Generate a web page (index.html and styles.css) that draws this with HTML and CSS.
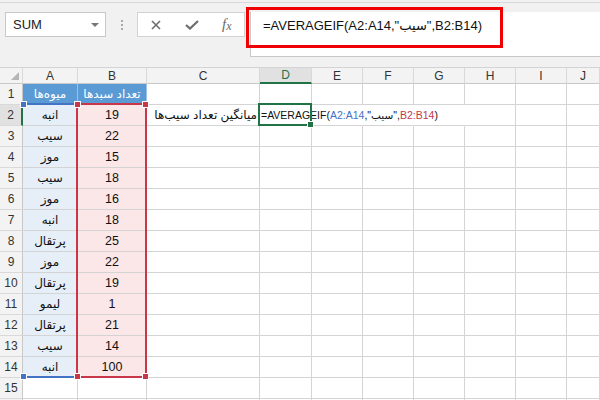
FILE: index.html
```html
<!DOCTYPE html>
<html lang="fa">
<head>
<meta charset="utf-8">
<link rel="stylesheet" href="styles.css">
</head>
<body>
<div class="topbar">
  <div class="namebox"><span>SUM</span><i class="caret"></i></div>
  <div class="dots"><b></b><b></b><b></b></div>
  <div class="btns">
    <svg class="ic-x" width="10" height="10" viewBox="0 0 10 10"><path d="M1 1L9 9M9 1L1 9" stroke="#6e6e6e" stroke-width="1.6"/></svg>
    <svg class="ic-ok" width="14" height="10" viewBox="0 0 14 10"><path d="M1 5L5 8.6L13 1" stroke="#6e6e6e" stroke-width="2.2" fill="none"/></svg>
    <span class="fx">f<span class="fxx">x</span></span>
  </div>
  <div class="formula">
    <div class="ftext">=AVERAGEIF(A2:A14,"سیب",B2:B14)</div>
    <div class="redbox"></div>
  </div>
</div>
<div class="sheet">
  <div class="h corner"><i class="tri"></i></div><div class="h">A</div><div class="h">B</div><div class="h">C</div><div class="h hsel">D</div><div class="h">E</div><div class="h">F</div><div class="h">G</div><div class="h">H</div><div class="h">I</div><div class="h">J</div>

  <div class="r">1</div><div class="c hd">میوه‌ها</div><div class="c hd">تعداد سبدها</div><div class="c"></div><div class="c"></div><div class="c"></div><div class="c"></div><div class="c"></div><div class="c"></div><div class="c"></div><div class="c"></div>

  <div class="r rsel">2</div><div class="c fa">انبه</div><div class="c nb">19</div><div class="c lbl">میانگین تعداد سیب‌ها</div><div class="c act nr">=AVERAGEIF(<span class="rb">A2:A14</span>,"سیب",<span class="rr">B2:B14</span>)</div><div class="c nr"></div><div class="c nr"></div><div class="c nr"></div><div class="c"></div><div class="c"></div><div class="c"></div>

  <div class="r">3</div><div class="c fa">سیب</div><div class="c nb">22</div><div class="c"></div><div class="c"></div><div class="c"></div><div class="c"></div><div class="c"></div><div class="c"></div><div class="c"></div><div class="c"></div>
  <div class="r">4</div><div class="c fa">موز</div><div class="c nb">15</div><div class="c"></div><div class="c"></div><div class="c"></div><div class="c"></div><div class="c"></div><div class="c"></div><div class="c"></div><div class="c"></div>
  <div class="r">5</div><div class="c fa">سیب</div><div class="c nb">18</div><div class="c"></div><div class="c"></div><div class="c"></div><div class="c"></div><div class="c"></div><div class="c"></div><div class="c"></div><div class="c"></div>
  <div class="r">6</div><div class="c fa">موز</div><div class="c nb">16</div><div class="c"></div><div class="c"></div><div class="c"></div><div class="c"></div><div class="c"></div><div class="c"></div><div class="c"></div><div class="c"></div>
  <div class="r">7</div><div class="c fa">انبه</div><div class="c nb">18</div><div class="c"></div><div class="c"></div><div class="c"></div><div class="c"></div><div class="c"></div><div class="c"></div><div class="c"></div><div class="c"></div>
  <div class="r">8</div><div class="c fa">پرتقال</div><div class="c nb">25</div><div class="c"></div><div class="c"></div><div class="c"></div><div class="c"></div><div class="c"></div><div class="c"></div><div class="c"></div><div class="c"></div>
  <div class="r">9</div><div class="c fa">موز</div><div class="c nb">22</div><div class="c"></div><div class="c"></div><div class="c"></div><div class="c"></div><div class="c"></div><div class="c"></div><div class="c"></div><div class="c"></div>
  <div class="r">10</div><div class="c fa">پرتقال</div><div class="c nb">19</div><div class="c"></div><div class="c"></div><div class="c"></div><div class="c"></div><div class="c"></div><div class="c"></div><div class="c"></div><div class="c"></div>
  <div class="r">11</div><div class="c fa">لیمو</div><div class="c nb">1</div><div class="c"></div><div class="c"></div><div class="c"></div><div class="c"></div><div class="c"></div><div class="c"></div><div class="c"></div><div class="c"></div>
  <div class="r">12</div><div class="c fa">پرتقال</div><div class="c nb">21</div><div class="c"></div><div class="c"></div><div class="c"></div><div class="c"></div><div class="c"></div><div class="c"></div><div class="c"></div><div class="c"></div>
  <div class="r">13</div><div class="c fa">سیب</div><div class="c nb">14</div><div class="c"></div><div class="c"></div><div class="c"></div><div class="c"></div><div class="c"></div><div class="c"></div><div class="c"></div><div class="c"></div>
  <div class="r">14</div><div class="c fa">انبه</div><div class="c nb">100</div><div class="c"></div><div class="c"></div><div class="c"></div><div class="c"></div><div class="c"></div><div class="c"></div><div class="c"></div><div class="c"></div>
  <div class="r">15</div><div class="c"></div><div class="c"></div><div class="c"></div><div class="c"></div><div class="c"></div><div class="c"></div><div class="c"></div><div class="c"></div><div class="c"></div><div class="c"></div>
  <div class="r">16</div><div class="c"></div><div class="c"></div><div class="c"></div><div class="c"></div><div class="c"></div><div class="c"></div><div class="c"></div><div class="c"></div><div class="c"></div><div class="c"></div>

  <div class="blue-range"><i class="hdl hdl-tl"></i><i class="hdl hdl-bl"></i></div>
  <div class="red-range"><i class="hdl hdl-tl"></i><i class="hdl hdl-tr"></i><i class="hdl hdl-bl"></i><i class="hdl hdl-br"></i></div>
  <div class="active-box"><i class="fill-handle"></i></div>
</div>
</body>
</html>
```

FILE: styles.css
```css
html, body {
  margin: 0;
  padding: 0;
  width: 600px;
  height: 400px;
  overflow: hidden;
  background: #ffffff;
  font-family: "Liberation Sans", "DejaVu Sans", sans-serif;
}

.topbar {
  height: 68px;
  box-sizing: border-box;
  display: flex;
  align-items: flex-start;
  padding-top: 12px;
  background: linear-gradient(#f1f1f1 0 2px, #d9d9d9 2px 3px, #f1f1f1 3px);
  border-bottom: 1px solid #d4d4d4;
}

.namebox {
  margin-left: 5px;
  width: 101px;
  height: 25px;
  box-sizing: border-box;
  background: #fff;
  border: 1px solid #c8c8c8;
  display: flex;
  align-items: center;
  justify-content: space-between;
  padding: 0 6px 0 7px;
  font-size: 13px;
  color: #222;
}

.caret {
  width: 0;
  height: 0;
  border-left: 4px solid transparent;
  border-right: 4px solid transparent;
  border-top: 4px solid #777;
}

.dots {
  margin-left: 15px;
  width: 2px;
  padding-top: 8px;
  display: flex;
  flex-direction: column;
  gap: 2px;
}
.dots b {
  display: block;
  width: 2px;
  height: 2px;
  background: #a8a8a8;
}

.btns {
  margin-left: 14px;
  width: 108px;
  height: 25px;
  box-sizing: border-box;
  background: #fff;
  border: 1px solid #d2d2d2;
  display: flex;
  align-items: center;
}
.ic-x { margin-left: 13px; }
.ic-ok { margin-left: 24px; }
.fx {
  margin-left: 23px;
  font-family: "Liberation Serif", serif;
  font-style: italic;
  font-size: 15px;
  color: #6a6a6a;
  line-height: 1;
}
.fxx { font-size: 12px; position: relative; top: 1px; }

.formula {
  position: relative;
  margin-left: 5px;
  flex: 1;
  height: 45px;
  box-sizing: border-box;
  background: #fff;
  border-left: 1px solid #c8c8c8;
  border-bottom: 1px solid #c8c8c8;
}
.ftext {
  padding-left: 12px;
  line-height: 27px;
  font-size: 13px;
  color: #111;
  white-space: nowrap;
}
.redbox {
  position: absolute;
  left: -5px;
  top: -5px;
  width: 257px;
  height: 41px;
  box-sizing: border-box;
  border: 3px solid #f00000;
}

.sheet {
  position: relative;
  display: grid;
  grid-template-columns: 23px 55px 69px 113px 52px 51px 51px 51px 51px 51px 1fr;
  grid-template-rows: 16px;
  grid-auto-rows: 21px;
  background: #fff;
}

.h, .r, .c {
  box-sizing: border-box;
  border-right: 1px solid #d4d4d4;
  border-bottom: 1px solid #d4d4d4;
  display: flex;
  align-items: center;
  justify-content: center;
  white-space: nowrap;
}

.h {
  background: #f3f3f3;
  font-size: 12px;
  color: #333;
  border-right-color: #d9d9d9;
  border-bottom-color: #c8c8c8;
}
.hsel {
  background: #e1e1e1;
  color: #217346;
  border-bottom: 2px solid #217346;
}
.corner { position: relative; }
.tri {
  position: absolute;
  right: 3px;
  bottom: 3px;
  width: 0;
  height: 0;
  border-left: 8px solid transparent;
  border-bottom: 8px solid #b5b5b5;
}

.r {
  background: #f3f3f3;
  font-size: 12px;
  color: #333;
  border-right-color: #c8c8c8;
  border-bottom-color: #d9d9d9;
}
.rsel {
  background: #e1e1e1;
  border-right: 2px solid #217346;
}

.c {
  font-size: 12px;
  color: #111;
}
.hd {
  background: #5b9bd5;
  color: #fff;
  direction: rtl;
  border-right-color: #9cc2e5;
}
.fa {
  background: #e6eef8;
  direction: rtl;
  font-size: 12px;
}
.nb {
  background: #fbe7e8;
  font-size: 12.5px;
}
.lbl {
  direction: rtl;
  justify-content: flex-start;
  padding-right: 2px;
  font-size: 12px;
  overflow: visible;
}
.act {
  justify-content: flex-start;
  padding-left: 1px;
  font-size: 10.5px;
  overflow: visible;
  position: relative;
  z-index: 1;
}
.rb { color: #4472c4; }
.rr { color: #c8364a; }
.nr { border-right-color: transparent; }

.blue-range {
  position: absolute;
  left: 23px;
  top: 35px;
  width: 54px;
  height: 275px;
  box-sizing: border-box;
  border-top: 2px solid #4472c4;
  border-bottom: 2px solid #4472c4;
}
.blue-range .hdl { background: #4472c4; }

.red-range {
  position: absolute;
  left: 76px;
  top: 35px;
  width: 71px;
  height: 275px;
  box-sizing: border-box;
  border: 2px solid #c8364a;
}
.red-range .hdl { background: #c8364a; }

.hdl {
  position: absolute;
  width: 5px;
  height: 5px;
  border: 1px solid #fff;
}
.hdl-tl { left: -4px; top: -4px; }
.hdl-tr { right: -4px; top: -4px; }
.hdl-bl { left: -4px; bottom: -4px; }
.hdl-br { right: -4px; bottom: -4px; }
.blue-range .hdl-tl, .blue-range .hdl-bl { left: -3px; }

.active-box {
  position: absolute;
  left: 258px;
  top: 35px;
  width: 54px;
  height: 23px;
  box-sizing: border-box;
  border: 2px solid #217346;
  z-index: 2;
}
.fill-handle {
  position: absolute;
  right: -4px;
  bottom: -4px;
  width: 5px;
  height: 5px;
  background: #217346;
  border: 1px solid #fff;
}
```
